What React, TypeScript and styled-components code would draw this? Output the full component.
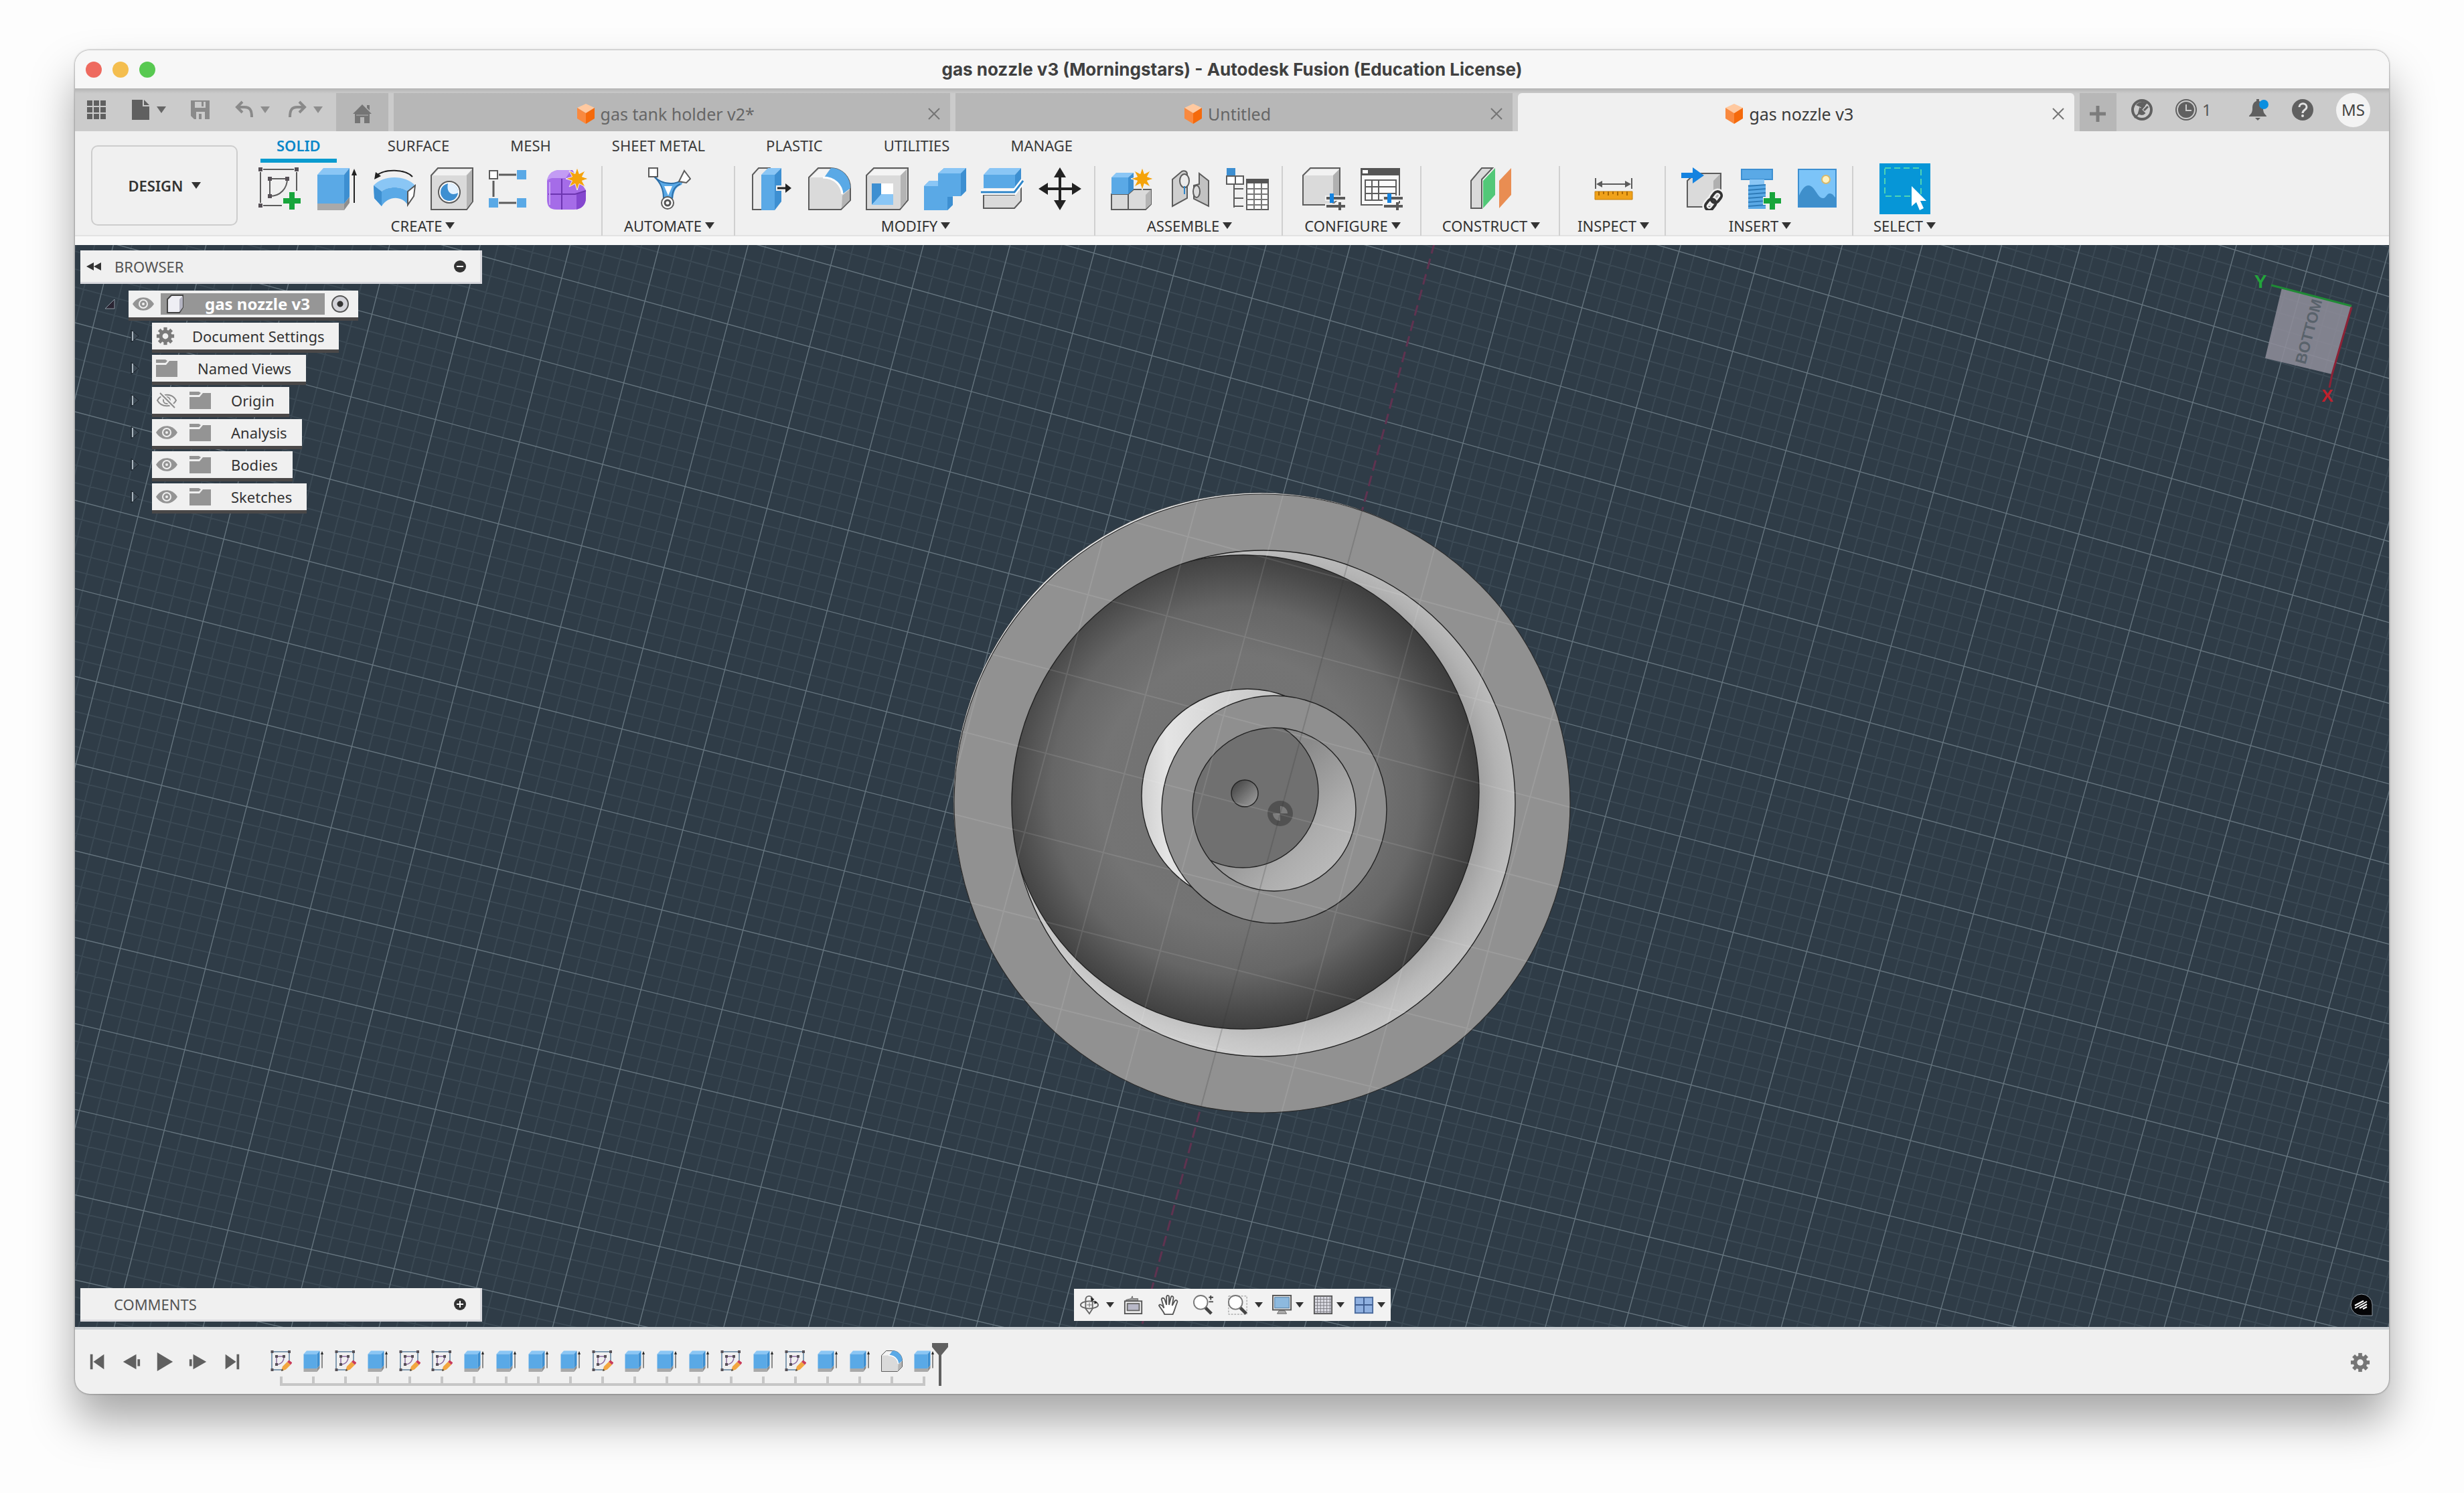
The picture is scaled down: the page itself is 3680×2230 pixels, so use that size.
import React from "react";
import styled, { createGlobalStyle, css } from "styled-components";

const GlobalStyle = createGlobalStyle`
  *, *::before, *::after { box-sizing: border-box; }
  html, body, #root { margin: 0; min-height: 100vh; }
  body { background: #fdfdfd; }
  button, input { font: inherit; color: inherit; margin: 0; padding: 0; border: 0; background: none; }
  ul, ol { list-style: none; margin: 0; padding: 0; }
`;

/* ---------- window ---------- */

const Desktop = styled.div`
  display: flex;
  min-height: 100vh;
  padding: 75px 112px 148px;
  font-family: "Noto Sans", "Open Sans", sans-serif;
  font-size: 22px;
  line-height: 30px;
  color: #3a3a3a;
`;

const Window = styled.div`
  flex: 1;
  min-width: 0;
  display: flex;
  flex-direction: column;
  overflow: hidden;
  border-radius: 22px;
  background: #f0f0f0;
  box-shadow: 0 0 3px rgba(0, 0, 0, 0.55), 0 40px 66px rgba(0, 0, 0, 0.34);
`;

const TitleBar = styled.header`
  display: grid;
  grid-template-columns: 1fr auto 1fr;
  align-items: center;
  height: 57px;
  padding: 0 16px;
  background: #f7f7f7;
`;

const Lights = styled.div`
  display: flex;
  gap: 16px;
`;

const Light = styled.button<{ $color: string }>`
  width: 24px;
  height: 24px;
  border-radius: 50%;
  background: ${(p) => p.$color};
`;

const WindowTitle = styled.h1`
  margin: 0;
  font: 700 26px/32px Inter, "Liberation Sans", sans-serif;
  color: #404040;
`;

/* ---------- document tabs ---------- */

const TabBar = styled.div`
  display: flex;
  align-items: center;
  height: 64px;
  background: linear-gradient(#b4b4b4, #c6c6c6 6px, #cbcbcb 8px);
`;

const QuickTools = styled.div`
  display: flex;
  align-items: center;
  gap: 36px;
  width: 390px;
  padding-left: 17px;
  color: #666;
`;

const QuickGroup = styled.div`
  display: flex;
  gap: 26px;
  color: #8d8d8d;
`;

const IconButton = styled.button`
  display: flex;
  align-items: center;
  gap: 9px;
`;

const Caret = styled.span`
  flex: none;
  width: 0;
  height: 0;
  border: 7px solid transparent;
  border-top: 10px solid currentColor;
  border-bottom: 0;
`;

const DocTabs = styled.div`
  flex: 1;
  min-width: 0;
  display: flex;
  align-self: flex-end;
  gap: 8px;
  height: 57px;
`;

const tabShape = css`
  display: flex;
  align-items: center;
  justify-content: center;
  padding-top: 5px;
  background: #b7b7b7;
  color: #666;
`;

const SmallTab = styled.button<{ $width: number }>`
  ${tabShape}
  width: ${(p) => p.$width}px;
`;

const DocTab = styled.div<{ $active?: boolean }>`
  ${tabShape}
  flex: 1;
  min-width: 0;
  padding-right: 14px;
  ${(p) => p.$active && "background: #f0f0f0; color: #3a3a3a; border-radius: 6px 6px 0 0;"}
`;

const DocTitle = styled.button`
  flex: 1;
  display: flex;
  align-items: center;
  justify-content: center;
  gap: 8px;
  padding-left: 14px;
  font-size: 25px;
  line-height: 32px;
`;

const Status = styled.div`
  display: flex;
  align-items: center;
  gap: 34px;
  padding: 0 28px 0 22px;
  color: #636363;
`;

const StatusButton = styled.button<{ $wide?: boolean }>`
  display: flex;
  align-items: center;
  gap: 8px;
  min-width: ${(p) => (p.$wide ? 74 : 32)}px;
  font-size: 24px;
  color: #555;
`;

const Avatar = styled.button`
  width: 51px;
  height: 51px;
  border-radius: 50%;
  background: #f3f3f3;
  font-size: 24px;
  color: #444;
`;

/* ---------- ribbon ---------- */

const Ribbon = styled.div`
  display: flex;
  height: 170px;
  border-bottom: 13px solid #f8f8f8;
  box-shadow: inset 0 -2px #e2e2e2;
`;

const Workspace = styled.button`
  display: flex;
  align-items: center;
  justify-content: center;
  gap: 12px;
  width: 219px;
  height: 120px;
  margin: 21px 7px 0 24px;
  border: 2px solid #cdcdcd;
  border-radius: 10px;
  font-weight: 600;
  color: #333;
`;

const RibbonTabs = styled.div`
  display: flex;
  gap: 43px;
  height: 52px;
  padding-left: 27px;
`;

const RibbonTab = styled.button<{ $active?: boolean }>`
  height: 47px;
  padding: 0 24px;
  border-bottom: 6px solid ${(p) => (p.$active ? "#0a9bcf" : "transparent")};
  color: ${(p) => (p.$active ? "#0a87c9" : "#3a3a3a")};
  font-weight: ${(p) => (p.$active ? 600 : 400)};
  &:first-child { margin-right: 9px; }
`;

const Groups = styled.div`
  display: flex;
`;

const Group = styled.section<{ $min: number }>`
  display: flex;
  flex-direction: column;
  align-items: center;
  gap: 8px;
  min-width: ${(p) => p.$min}px;
  height: 104px;
  padding: 2px 18px 0 21px;
  border-right: 2px solid #d0d0d0;
  &:last-child { border-right: 0; }
`;

const ToolRow = styled.div`
  display: flex;
  gap: 22px;
  height: 64px;
`;

const Tool = styled.button<{ $active?: boolean }>`
  display: flex;
  ${(p) => p.$active && "margin: -6px; padding: 6px; width: 76px; height: 76px; background: #0696d7;"}
`;

const GroupLabel = styled.button`
  display: flex;
  align-items: center;
  gap: 5px;
  height: 30px;
  white-space: nowrap;
  color: #333;
`;

/* ---------- canvas ---------- */

const Canvas = styled.main`
  position: relative;
  flex: 1;
  min-height: 0;
  overflow: hidden;
  background: #2f3c47;
`;

const SceneSvg = styled.svg`
  position: absolute;
  inset: 0;
  width: 100%;
  height: 100%;
`;

const Overlay = styled.div`
  position: relative;
  display: flex;
  flex-direction: column;
  justify-content: space-between;
  height: 100%;
  padding: 8px;
`;

const OverlayTop = styled.div`
  display: flex;
  justify-content: space-between;
`;

const OverlayBottom = styled.div`
  display: grid;
  grid-template-columns: 1fr auto 1fr;
  align-items: center;
`;

const Panel = styled.div`
  display: flex;
  align-items: center;
  gap: 20px;
  width: 600px;
  height: 50px;
  padding: 0 21px 0 9px;
  background: #f0f0f0;
  border-right: 3px solid #d9d9de;
  border-bottom: 3px solid #d9d9de;
  color: #555;
`;

const PanelTitle = styled.h2<{ $indent?: boolean }>`
  flex: 1;
  margin: 0;
  padding-left: ${(p) => (p.$indent ? 41 : 0)}px;
  font-size: 22px;
  font-weight: 400;
`;

const Tree = styled.ul<{ $root?: boolean }>`
  display: flex;
  flex-direction: column;
  gap: 8px;
  padding: ${(p) => (p.$root ? "10px 0 0 34px" : "8px 0 0 39px")};
`;

const TreeLine = styled.div`
  display: flex;
  align-items: center;
  gap: 18px;
`;

const TreeItem = styled.div<{ $root?: boolean }>`
  display: flex;
  align-items: center;
  gap: ${(p) => (p.$root ? 10 : 18)}px;
  height: 40px;
  padding: 0 ${(p) => (p.$root ? 14 : 22)}px 0 6px;
  background: #f0f0f0;
  box-shadow: 0 5px #4a4848;
`;

const TreeName = styled.button<{ $pad: number }>`
  padding-left: ${(p) => p.$pad}px;
  color: #333;
`;

const RootName = styled.button`
  display: flex;
  align-items: center;
  gap: 30px;
  height: 32px;
  padding: 0 22px 0 8px;
  background: #969696;
  color: #fff;
  font-size: 24px;
  font-weight: 700;
`;

const ActiveRadio = styled.input`
  appearance: none;
  width: 26px;
  height: 26px;
  border: 2px solid #555;
  border-radius: 50%;
  background: radial-gradient(circle, #333 4px, #d4d4da 5px);
`;

const NavBar = styled.nav`
  display: flex;
  align-items: center;
  gap: 14px;
  height: 48px;
  padding: 0 8px;
  background: #f2f2f2;
  color: #333;
`;

const NavButton = styled.button<{ $gap: number; $menu?: boolean }>`
  display: flex;
  align-items: center;
  gap: ${(p) => p.$gap}px;
  padding-right: ${(p) => (p.$menu ? 0 : 8)}px;
`;

const NavCaret = styled(Caret)`
  border-width: 8px 6px 0;
`;

const Assist = styled.button`
  display: flex;
  justify-self: end;
  margin-right: 16px;
`;

/* ---------- timeline ---------- */

const TimelineBar = styled.footer`
  display: flex;
  align-items: flex-start;
  height: 100px;
  padding: 0 28px 0 19px;
  border-top: 4px solid #cbd0d4;
`;

const Playback = styled.div`
  display: flex;
  align-items: center;
  gap: 20px;
  width: 265px;
  padding-top: 33px;
  color: #606060;
`;

const Track = styled.div`
  padding-top: 31px;
`;

const Features = styled.ol`
  display: flex;
`;

const Feature = styled.li`
  display: flex;
  flex-direction: column;
  align-items: center;
  gap: 7px;
  width: 48px;
  &::after { content: ""; width: 4px; height: 10px; background: #c6c6c6; }
`;

const Rail = styled.div`
  height: 4px;
  margin: 0 22px;
  background: #c6c6c6;
`;

const Marker = styled.button`
  display: flex;
  margin: 20px auto 0 -12px;
`;

const Settings = styled.button`
  display: flex;
  padding-top: 34px;
`;

/* ---------- icons ---------- */

const BLUE = "#5aa9e6";
const PALE = "#8ac6f5";
const DEEP = "#3d8fd1";
const GRAY = "#dadada";
const INK = "#5c5c5c";

type IconProps = { size?: number; box?: number; children?: React.ReactNode };
const Icon = ({ size = 64, box = 64, children }: IconProps) => (
  <svg width={size} height={size} viewBox={`0 0 ${box} ${box}`} fill="none" aria-hidden="true">
    {children}
  </svg>
);

const star = (cx: number, cy: number, R: number, r: number, n = 8) =>
  Array.from({ length: n * 2 }, (_, i) => {
    const a = (Math.PI * i) / n - Math.PI / 2;
    const d = i % 2 ? r : R;
    return `${(cx + d * Math.cos(a)).toFixed(1)},${(cy + d * Math.sin(a)).toFixed(1)}`;
  }).join(" ");

const Star = ({ x, y }: { x: number; y: number }) => (
  <polygon points={star(x, y, 17, 8)} fill="#f5a30a" stroke="#f0f0f0" />
);

const Plus = ({ x, y }: { x: number; y: number }) => (
  <path d={`M${x - 13} ${y}h26M${x} ${y - 13}v26`} stroke="#17a53b" strokeWidth="8" />
);

const Dots = ({ pts, s = 6 }: { pts: number[][]; s?: number }) => (
  <>
    {pts.map(([x, y]) => (
      <rect key={`${x}-${y}`} x={x - s / 2} y={y - s / 2} width={s} height={s} fill="#565056" />
    ))}
  </>
);

const Sliders = () => (
  <g>
    <path d="M34 46h30M34 58h30" stroke="#f0f0f0" strokeWidth="8" />
    <path d="M36 46h28M36 58h28M56 52v12" stroke="#5a5a5a" strokeWidth="4" />
    <path d="M44 39v14" stroke="#1583e0" strokeWidth="6" />
  </g>
);

const tools: Record<string, React.ReactNode> = {
  sketch: (
    <>
      <path d="M8 3h46M4 7v46M58 7v28M8 57h28" stroke={INK} strokeWidth="2" />
      <path d="M20 17h22M18 19v22M44 17c0 14-10 26-26 26" stroke={INK} strokeWidth="2" />
      <Dots pts={[[4, 3], [58, 3], [4, 57], [18, 17], [44, 17], [18, 43]]} />
      <Plus x={51} y={50} />
    </>
  ),
  extrude: (
    <>
      <path d="M3 54h40v10H3z" fill="#a9a9a9" />
      <path d="M43 54l8-10v9l-8 11z" fill="#8e8e8e" />
      <path d="M3 11L12 1h39l-8 10z" fill={PALE} />
      <path d="M3 11h40v43H3z" fill={BLUE} />
      <path d="M43 11l8-10v43l-8 10z" fill={DEEP} />
      <path d="M58 53V8" stroke="#222" strokeWidth="2" />
      <path d="M54 12l4-10 4 10z" fill="#222" />
    </>
  ),
  revolve: (
    <>
      <path d="M59 14C48 2 17 2 6 12" stroke="#222" strokeWidth="2" />
      <path d="M2 18l2-11 8 6z" fill="#222" />
      <path d="M1 27c14-16 48-16 62 0L52 36C42 28 22 28 13 36z" fill={PALE} />
      <path d="M1 27l12 9v22L2 46zM13 36c9-8 29-8 39 0l0 20c-9-14-29-14-39 2z" fill={BLUE} />
      <path d="M1 27l12 9v22L2 46z" fill={DEEP} />
      <path d="M52 36l11-9-2 16-9 13z" fill="#fff" stroke="#555" strokeWidth="2" />
    </>
  ),
  hole: (
    <>
      <path d="M1 12L11 1h52v50L54 63H1z" fill={GRAY} stroke={INK} strokeWidth="2" />
      <path d="M3 12L12 3h50l-9 9z" fill="#f2f2f2" />
      <path d="M54 12l8-9v48l-8 10z" fill="#b4b4b4" />
      <circle cx="28" cy="37" r="16" fill="#fff" stroke={INK} strokeWidth="2" />
      <circle cx="28" cy="37" r="13" fill={DEEP} />
      <path d="M26 24c-3 14 6 19 15 14a13 13 0 0 0-15-14z" fill="#e3f2ff" />
    </>
  ),
  pattern: (
    <>
      <path d="M16 11h26M8 20v24M16 53h26" stroke={INK} strokeWidth="3" />
      <rect x="2" y="5" width="12" height="12" fill="#fff" stroke={INK} strokeWidth="2" />
      <path d="M43 4h14v14H43zM1 46h14v14H1zM43 46h14v14H43z" fill={BLUE} />
    </>
  ),
  form: (
    <>
      <path d="M2 20C4 8 12 4 22 4h18l20 30v12c0 10-8 17-18 17H16C6 63 2 58 2 48z" fill="#a56ce8" />
      <path d="M2 20C4 8 12 4 22 4h16L30 16H12C6 16 4 18 2 20z" fill="#c39cf4" />
      <path d="M46 40l14-6v12c0 10-6 15-14 17z" fill="#8447cf" />
      <path d="M4 40h40l16-5M24 17v46" stroke="#6c35b0" strokeWidth="2" />
      <path d="M6 22v34" stroke="#c9a6f5" strokeWidth="2" />
      <Star x={47} y={17} />
    </>
  ),
  automate: (
    <>
      <path d="M8 12c8 10 18 12 26 12 8 0 14-3 20-8l-4 10c-8 3-12 8-13 24H23C23 34 20 22 8 12z" fill={BLUE} />
      <path d="M8 12c8 10 18 12 26 12 8 0 14-3 18-6M36 46c0-10 4-18 12-21M23 46c0-12-5-24-14-32" stroke="#2b6ea8" strokeWidth="2" />
      <path d="M24 28h12l-6 14z" fill="#fff" />
      <rect x="1" y="1" width="13" height="13" fill="#fff" stroke={INK} strokeWidth="2" />
      <path d="M54 5l9 12-6 6-11-2z" fill="#fff" stroke={INK} strokeWidth="2" />
      <circle cx="29" cy="53" r="9" fill="#fff" stroke={INK} strokeWidth="2" />
      <circle cx="29" cy="53" r="4" stroke="#555" strokeWidth="3" />
    </>
  ),
  pressPull: (
    <>
      <path d="M3 11L12 1h16L18 11v52H3z" fill="#ececec" stroke={INK} strokeWidth="2" />
      <path d="M16 11L26 1h20L36 11z" fill={PALE} />
      <path d="M16 11h20v53H16z" fill={BLUE} />
      <path d="M36 11L46 1v50L36 64z" fill={DEEP} />
      <path d="M38 31h18" stroke="#f0f0f0" strokeWidth="8" />
      <path d="M40 31h16" stroke="#222" strokeWidth="3" />
      <path d="M52 24l9 7-9 7z" fill="#222" />
    </>
  ),
  fillet: (
    <>
      <path d="M1 15L15 1h18c18 0 30 14 30 30v18L49 63H1z" fill={GRAY} stroke={INK} strokeWidth="2" />
      <path d="M3 15L16 3h16l-8 12z" fill="#f4f4f4" />
      <path d="M24 15L34 1c18 0 29 14 29 30L51 40C50 26 40 15 24 15z" fill={BLUE} />
      <path d="M22 15c18 0 28 12 29 25" stroke="#fff" strokeWidth="3" />
      <path d="M51 42l11-9v16L50 61z" fill="#b4b4b4" />
    </>
  ),
  shell: (
    <>
      <path d="M1 12L12 1h51v48L51 63H1z" fill={GRAY} stroke={INK} strokeWidth="2" />
      <path d="M3 12L13 3h48l-9 9z" fill="#f4f4f4" />
      <path d="M52 12l9-9v46l-9 12z" fill="#b4b4b4" />
      <path d="M9 24h32v32H9z" fill="#fff" />
      <path d="M9 24h14v18L9 56z" fill={DEEP} />
      <path d="M9 56l14-16h18v16z" fill={PALE} />
    </>
  ),
  combine: (
    <>
      <path d="M1 28l8-8h13V9l9-8h33v34l-8 8H44v13l-8 8H1z" fill={BLUE} />
      <path d="M1 28l8-8h13v8zM22 9l9-8h33l-8 8z" fill={PALE} />
      <path d="M56 9l8-8v34l-8 8zM36 44h8v12l-8 8z" fill={DEEP} />
    </>
  ),
  split: (
    <>
      <path d="M4 46l0-5h46L60 28v22L50 61H4z" fill={GRAY} stroke={INK} strokeWidth="2" />
      <path d="M4 11L13 1h47L51 11z" fill={PALE} />
      <path d="M4 11h47v20H4z" fill={BLUE} />
      <path d="M51 11l9-10v18L51 31z" fill={DEEP} />
      <path d="M0 37h50l13-17" stroke="#fff" strokeWidth="8" />
      <path d="M0 37h50l13-17" stroke="#2f86c9" strokeWidth="3" />
    </>
  ),
  move: (
    <>
      <path d="M32 10v44M10 32h44" stroke="#222" strokeWidth="4" />
      <path d="M32 0l9 15H23zM32 64l9-15H23zM0 32l14-9v18zM64 32l-14-9v18z" fill="#222" />
    </>
  ),
  component: (
    <>
      <path d="M26 40l8-7h26v22l-8 8H26z" fill={GRAY} stroke={INK} strokeWidth="2" />
      <path d="M1 40h25v23H1z" fill={GRAY} stroke={INK} strokeWidth="2" />
      <path d="M52 41l8-8v22l-8 7z" fill="#b4b4b4" />
      <path d="M1 15l7-7h26l-8 7z" fill={PALE} />
      <path d="M1 15h25v25H1z" fill={BLUE} />
      <path d="M26 15l8-7v25l-8 7z" fill={DEEP} />
      <Star x={47} y={17} />
    </>
  ),
  joint: (
    <>
      <path d="M6 58V18L20 6c4-2 8 0 8 4v36z" fill="#cfcfcf" stroke={INK} strokeWidth="2" />
      <path d="M60 58V20L46 9v16l-8 2v20z" fill="#c2c2c2" stroke={INK} strokeWidth="2" />
      <ellipse cx="24" cy="20" rx="7" ry="10" fill="#ececec" stroke={INK} strokeWidth="2" />
      <path d="M24 28v12" stroke="#2f86c9" strokeWidth="2" />
      <ellipse cx="42" cy="36" rx="5" ry="9" fill="#dcdcdc" stroke={INK} strokeWidth="2" />
    </>
  ),
  table: (
    <>
      <path d="M12 26v34M12 32h14M12 46h14M12 58h14" stroke={INK} strokeWidth="2" />
      <path d="M1 1h13v12H1z" fill={DEEP} />
      <path d="M1 13h13v12H1zM14 13h12v12H14z" fill="#fff" stroke={INK} strokeWidth="2" />
      <path d="M31 18h32v45H31z" fill="#fff" stroke={INK} strokeWidth="2" />
      <path d="M30 17h34v7H30z" fill="#555" />
      <path d="M31 32h32M31 40h32M31 48h32M31 56h32M42 24v39M53 24v39" stroke="#777" strokeWidth="2" />
    </>
  ),
  configure: (
    <>
      <path d="M1 12L12 1h44v44L44 56H1z" fill={GRAY} stroke={INK} strokeWidth="2" />
      <path d="M3 12L13 3h42l-9 9z" fill="#f2f2f2" />
      <path d="M46 12l9-9v42l-9 9z" fill="#b0b0b0" />
      <Sliders />
    </>
  ),
  configTable: (
    <>
      <path d="M2 2h57v54H2z" fill="#fafafa" stroke={INK} strokeWidth="2" />
      <path d="M1 1h59v11H1z" fill="#555" />
      <path d="M4 4h8v5H4z" fill="#fff" />
      <path d="M8 19h46v30H8zM8 29h46M8 39h46M18 19v30M28 19v30" stroke={INK} strokeWidth="2" />
      <Sliders />
    </>
  ),
  construct: (
    <>
      <path d="M2 20L18 1h16L18 18v43H2z" fill={GRAY} stroke={INK} strokeWidth="2" />
      <path d="M20 20L38 1v40L20 61z" fill="#52c878" />
      <path d="M44 20L62 1v40L44 61z" fill="#e98d52" />
    </>
  ),
  inspect: (
    <>
      <path d="M5 16v16M59 16v16M8 25h48" stroke={INK} strokeWidth="2" />
      <path d="M6 25l9-5v10zM58 25l-9-5v10z" fill={INK} />
      <path d="M4 36h56v12H4z" fill="#f0a21a" stroke="#c47d08" strokeWidth="1" />
      <path d="M10 36v6M17 36v4M24 36v6M31 36v4M38 36v6M45 36v4M52 36v6" stroke="#a86600" strokeWidth="2" />
    </>
  ),
  derive: (
    <>
      <path d="M9 20l12-11h38v34L47 59H9z" fill={GRAY} stroke={INK} strokeWidth="2" />
      <path d="M48 20l10-10v32L48 56z" fill="#b0b0b0" />
      <path d="M0 8h17V0l17 12-17 12v-8H0z" fill="#1583e0" />
      <g transform="rotate(-52 48 50)" stroke="#f0f0f0" strokeWidth="9">
        <rect x="32" y="44" width="18" height="12" rx="6" />
        <rect x="46" y="44" width="18" height="12" rx="6" />
      </g>
      <g transform="rotate(-52 48 50)" stroke="#333" strokeWidth="4">
        <rect x="32" y="44" width="18" height="12" rx="6" />
        <rect x="46" y="44" width="18" height="12" rx="6" />
      </g>
    </>
  ),
  fastener: (
    <>
      <path d="M4 3h46v15H4z" fill={BLUE} stroke={DEEP} strokeWidth="2" />
      <path d="M16 18h22v8H16z" fill={PALE} />
      <path d="M14 26h26v36H14z" fill={BLUE} />
      <path d="M14 28l26-2M14 34l26-2M14 40l26-2M14 46l26-2M14 52l26-2M14 58l26-2" stroke="#2e7bb8" strokeWidth="2" />
      <path d="M36 50h28M50 36v28" stroke="#f0f0f0" strokeWidth="12" />
      <Plus x={50} y={50} />
    </>
  ),
  image: (
    <>
      <rect x="3" y="3" width="56" height="56" fill="#7cc4f8" stroke={DEEP} strokeWidth="2" />
      <path d="M4 42c6-14 14-20 22-10 6 8 8 14 14 14 4 0 6-8 10-7 4 0 6 4 8 6v13H4z" fill="#3f8fcb" />
      <circle cx="44" cy="18" r="6" fill="#fff2c0" stroke="#d8b96a" strokeWidth="2" />
    </>
  ),
  select: (
    <>
      <rect x="2" y="1" width="54" height="42" stroke="#4fd3b4" strokeWidth="2" strokeDasharray="9 5" />
      <path d="M42 28v30l7-6 5 12 6-3-5-11h9z" fill="#fff" />
    </>
  ),
  sketchEdit: (
    <>
      <path d="M6 4h46M4 6v50M56 6v26M6 58h30" stroke="#5c7f9c" strokeWidth="3" />
      <path d="M18 18h22M18 18v24M40 20c0 12-8 22-22 22" stroke="#8d6ba0" strokeWidth="3" />
      <Dots pts={[[5, 4], [56, 4], [5, 58], [18, 18], [40, 18], [18, 42]]} s={8} />
      <path d="M32 62l4-14 14-14 10 9-14 14z" fill="#f2a640" />
      <path d="M50 34l5-5 10 8-5 6z" fill="#c93b5b" />
      <path d="M32 62l2-7 5 5z" fill="#444" />
    </>
  ),
};

const Cube = () => (
  <svg width="28" height="30" viewBox="0 0 28 30" aria-hidden="true">
    <path d="M14 0l13 6-13 8L1 6z" fill="#ffc9a0" />
    <path d="M1 6l13 8v16L1 22z" fill="#f9893f" />
    <path d="M27 6l-13 8v16l13-8z" fill="#f56a0c" />
  </svg>
);

const Close = () => (
  <svg width="20" height="20" viewBox="0 0 20 20" aria-hidden="true">
    <path d="M2 2l16 16M18 2L2 18" stroke="#757575" strokeWidth="2" />
  </svg>
);

const Eye = ({ off }: { off?: boolean }) => (
  <svg width="32" height="24" viewBox="0 0 32 24" fill="none" aria-hidden="true">
    {off ? (
      <>
        <path d="M2 12C8 1 24 1 30 12 24 23 8 23 2 12z" stroke="#8c8c8c" strokeWidth="2" />
        <circle cx="16" cy="12" r="5" stroke="#8c8c8c" strokeWidth="2" />
        <path d="M6 1l22 22" stroke="#f0f0f0" strokeWidth="6" />
        <path d="M6 1l22 22" stroke="#8c8c8c" strokeWidth="2" />
      </>
    ) : (
      <>
        <path d="M0 12C8-1 24-1 32 12 24 25 8 25 0 12z" fill="#949494" />
        <circle cx="16" cy="12" r="6" stroke="#f0f0f0" strokeWidth="2" />
        <circle cx="16" cy="12" r="2" fill="#f0f0f0" />
      </>
    )}
  </svg>
);

const Folder = () => (
  <svg width="32" height="26" viewBox="0 0 32 26" aria-hidden="true">
    <path d="M0 0h14l3 2-3 3H0zM0 8h15l5-6h12v24H0z" fill="#949494" />
  </svg>
);

const Gear = ({ size, color }: { size: number; color: string }) => (
  <Icon size={size} box={32}>
    {[0, 45, 90, 135].map((a) => (
      <rect key={a} x="13" y="1" width="6" height="30" fill={color} transform={`rotate(${a} 16 16)`} />
    ))}
    <circle cx="16" cy="16" r="11" fill={color} />
    <circle cx="16" cy="16" r="5" fill="#f0f0f0" />
  </Icon>
);

const Twisty = ({ open }: { open?: boolean }) => (
  <svg width={open ? 20 : 16} height="20" viewBox={open ? "0 0 20 20" : "0 0 16 20"} aria-hidden="true">
    {open ? (
      <path d="M17 3v14H3z" fill="#2a2533" stroke="#8b96a0" />
    ) : (
      <>
        <path d="M3 1l11 9-11 9z" fill="#3d4a55" stroke="#1b222a" />
        <path d="M5 3v14" stroke="#a9b4bd" strokeWidth="2" />
      </>
    )}
  </svg>
);

const RoundSign = ({ plus }: { plus?: boolean }) => (
  <Icon size={18} box={18}>
    <circle cx="9" cy="9" r="9" fill="#333" />
    <path d={plus ? "M4 9h10M9 4v10" : "M4 9h10"} stroke="#fff" strokeWidth="2" />
  </Icon>
);

/* ---------- 3D scene ---------- */

const TOP = 375;
const BOTTOM = 1900;
const LEFT = 112;
const RIGHT = 3568;

const steep = (k: number) => {
  const a = (2139 + 132.08 * k) / (1 + 0.003658 * k);
  const b = (1727 + 128.61 * k) / (1 + 0.003395 * k);
  const s = (b - a) / (BOTTOM - TOP);
  return `M${(a + s * (340 - TOP)).toFixed(1)} 340L${(a + s * (2000 - TOP)).toFixed(1)} 2000`;
};

const shallow = (j: number) => {
  const l = (482 + 134.4 * j) / (1 + 0.00231 * j);
  const r = (443 + 123.3 * (j + 8)) / (1 + 0.0017 * (j + 8));
  return `M${LEFT} ${l.toFixed(1)}L${RIGHT} ${r.toFixed(1)}`;
};

const span = (from: number, to: number) => Array.from({ length: to - from + 1 }, (_, i) => from + i);
const majorPath =
  span(-16, 17).filter((k) => k !== 0).map(steep).join("") + span(-9, 12).map(shallow).join("");
const minorPath =
  span(-80, 85).filter((k) => k % 5).map((k) => steep(k / 5)).join("") +
  span(-45, 60).filter((j) => j % 5).map((j) => shallow(j / 5)).join("");

const Scene = () => (
  <SceneSvg viewBox="112 366 3456 1616" preserveAspectRatio="xMidYMid slice" fill="none" role="img" aria-label="gas nozzle model, bottom view">
    <defs>
      <radialGradient id="dome" gradientUnits="userSpaceOnUse" cx="1845" cy="1180" r="366">
        <stop offset="0" stopColor="#707070" />
        <stop offset="0.55" stopColor="#747474" />
        <stop offset="0.75" stopColor="#666" />
        <stop offset="0.9" stopColor="#4b4b4b" />
        <stop offset="1" stopColor="#3b3b3b" />
      </radialGradient>
      <radialGradient id="wall" gradientUnits="userSpaceOnUse" cx="1872" cy="1192" r="392">
        <stop offset="0.86" stopColor="#a0a0a0" />
        <stop offset="0.93" stopColor="#b2b2b2" />
        <stop offset="1" stopColor="#bebebe" />
      </radialGradient>
      <linearGradient id="wallGlow" x1="1" y1="0.8" x2="0.4" y2="1">
        <stop offset="0" stopColor="#fff" stopOpacity="0" />
        <stop offset="1" stopColor="#fff" stopOpacity="0.3" />
      </linearGradient>
      <linearGradient id="bore" x1="0" y1="0" x2="1" y2="1">
        <stop offset="0.4" stopColor="#8a8a8a" />
        <stop offset="0.7" stopColor="#adadad" />
        <stop offset="1" stopColor="#c4c4c4" />
      </linearGradient>
      <linearGradient id="side" x1="0" y1="0" x2="1" y2="0">
        <stop offset="0" stopColor="#cfcfcf" />
        <stop offset="0.12" stopColor="#e4e4e4" />
        <stop offset="0.6" stopColor="#c8c8c8" />
      </linearGradient>
      <linearGradient id="pin" x1="0" y1="0" x2="1" y2="1">
        <stop offset="0" stopColor="#3a3a3a" />
        <stop offset="1" stopColor="#a5a5a5" />
      </linearGradient>
      <clipPath id="opening"><ellipse cx="1887" cy="1200" rx="376" ry="378" /></clipPath>
      <clipPath id="boreClip"><ellipse cx="1903" cy="1209" rx="122" ry="122" /></clipPath>
      <clipPath id="body"><ellipse cx="1885" cy="1200" rx="460" ry="462" /></clipPath>
    </defs>
    <path d={minorPath} stroke="#3b4954" strokeWidth="2" />
    <path d={majorPath} stroke="#65747e" strokeWidth="1.4" />
    <path d={steep(0)} stroke="#5f3350" strokeWidth="3" strokeDasharray="16 8" />

    <ellipse cx="1882" cy="1197" rx="458" ry="461" fill="#e8e8e8" stroke="#222" strokeWidth="0.5" />
    <ellipse cx="1885" cy="1200" rx="460" ry="462" fill="#919191" stroke="#2a2a2a" strokeWidth="1.2" />
    <ellipse cx="1887" cy="1200" rx="376" ry="378" fill="url(#wall)" />
    <ellipse cx="1887" cy="1200" rx="376" ry="378" fill="url(#wallGlow)" />
    <g clipPath="url(#opening)">
      <ellipse cx="1857" cy="1183" rx="352" ry="354" fill="url(#dome)" stroke="#222" strokeWidth="1.4" />
    </g>
    <ellipse cx="1887" cy="1200" rx="376" ry="378" stroke="#222" strokeWidth="1.4" />
    <ellipse cx="1863" cy="1189" rx="158" ry="160" fill="url(#side)" stroke="#222" strokeWidth="1.4" />
    <ellipse cx="1903" cy="1209" rx="168" ry="170" fill="#8f8f8f" stroke="#222" strokeWidth="1.4" />
    <ellipse cx="1903" cy="1209" rx="122" ry="122" fill="url(#bore)" />
    <g clipPath="url(#boreClip)">
      <circle cx="1856" cy="1183" r="113" fill="#707070" stroke="#222" strokeWidth="1.4" />
    </g>
    <ellipse cx="1903" cy="1209" rx="122" ry="122" stroke="#222" strokeWidth="1.4" />
    <circle cx="1859" cy="1185" r="20" fill="url(#pin)" stroke="#222" strokeWidth="1.4" />
    <circle cx="1912" cy="1215" r="19" fill="#4a4a4a" opacity="0.8" />
    <path d="M1912 1215v-11a11 11 0 0 1 11 11zM1912 1215v11a11 11 0 0 1-11-11z" fill="#7c7c7c" />
    <g clipPath="url(#body)">
      <path d={majorPath} stroke="#fff" strokeWidth="2" opacity="0.1" />
      <path d={steep(0)} stroke="#333" strokeWidth="2" opacity="0.2" />
    </g>
  </SceneSvg>
);

const CubeButton = styled.button`
  display: block;
  margin: 26px 32px 0 0;
  height: 210px;
`;

const ViewCube = () => (
  <CubeButton aria-label="View cube">
    <svg width="168" height="210" viewBox="3360 400 168 210" aria-hidden="true">
      <path d="M3408 430l104 27-29 102-100-24z" fill="#8d8c98" opacity="0.88" />
      <path d="M3392 426l16 4 104 27" stroke="#1f8a35" strokeWidth="3" fill="none" />
      <path d="M3512 459l-29 100-4 20" stroke="#8c2236" strokeWidth="3" fill="none" />
      <g fontFamily="Liberation Sans, Arial, sans-serif" textAnchor="middle">
        <text x="3448" y="495" dy="8" fontSize="23" fontWeight="700" fill="#59626b" transform="rotate(-75 3448 495)">BOTTOM</text>
        <text x="3376" y="430" fontSize="28" fontWeight="700" fill="#22a43a">Y</text>
        <text x="3476" y="600" fontSize="26" fontWeight="700" fill="#c0202c">X</text>
      </g>
    </svg>
  </CubeButton>
);

/* ---------- data ---------- */

const ribbonTabs = ["SOLID", "SURFACE", "MESH", "SHEET METAL", "PLASTIC", "UTILITIES", "MANAGE"];

const groups: { label: string; min: number; items: string[] }[] = [
  { label: "CREATE", min: 538, items: ["sketch", "extrude", "revolve", "hole", "pattern", "form"] },
  { label: "AUTOMATE", min: 198, items: ["automate"] },
  { label: "MODIFY", min: 538, items: ["pressPull", "fillet", "shell", "combine", "split", "move"] },
  { label: "ASSEMBLE", min: 280, items: ["component", "joint", "table"] },
  { label: "CONFIGURE", min: 207, items: ["configure", "configTable"] },
  { label: "CONSTRUCT", min: 207, items: ["construct"] },
  { label: "INSPECT", min: 158, items: ["inspect"] },
  { label: "INSERT", min: 280, items: ["derive", "fastener", "image"] },
  { label: "SELECT", min: 150, items: ["select"] },
];

const docs = ["gas tank holder v2*", "Untitled", "gas nozzle v3"];

const nodes: { name: string; icon: "gear" | "folder"; eye?: "on" | "off" }[] = [
  { name: "Document Settings", icon: "gear" },
  { name: "Named Views", icon: "folder" },
  { name: "Origin", icon: "folder", eye: "off" },
  { name: "Analysis", icon: "folder", eye: "on" },
  { name: "Bodies", icon: "folder", eye: "on" },
  { name: "Sketches", icon: "folder", eye: "on" },
];

const history = "SESESSEEEESEEESESEEFE".split("");
const featureIcon: Record<string, string> = { S: "sketchEdit", E: "extrude", F: "fillet" };

const navItems: { name: string; menu?: boolean; gap?: number; art: React.ReactNode }[] = [
  {
    name: "Orbit",
    menu: true,
    gap: 10,
    art: (
      <>
        <ellipse cx="16" cy="16" rx="14" ry="6" stroke="#666" strokeWidth="2" />
        <path d="M10 22V8c0-8 11-8 11 0v14l-5 8z" stroke="#666" strokeWidth="2" />
        <path d="M16 12v8M12 16h8" stroke="#666" />
        <path d="M18 4l6 3-5 4zM24 9l5 3-5 3z" fill="#222" />
      </>
    ),
  },
  {
    name: "Look at",
    art: (
      <>
        <path d="M4 8l8-2 2-4 1 4h8v4H4z" fill="#999" stroke="#666" />
        <rect x="2" y="10" width="27" height="20" fill="#f4f4f4" stroke="#555" strokeWidth="2" />
        <rect x="6" y="14" width="19" height="11" fill="#b9b9c8" stroke="#666" strokeWidth="2" />
      </>
    ),
  },
  {
    name: "Pan",
    art: (
      <path
        d="M10 31c-2-5-6-9-9-14 1-3 5-1 8 4L5 7c1-3 4-2 5 0l3 9V3c1-3 4-2 4 0v13l3-12c1-3 4-2 4 1l-2 12 4-7c2-3 5-1 4 2-3 7-4 13-7 19z"
        fill="#fff" stroke="#555" strokeWidth="2"
      />
    ),
  },
  {
    name: "Zoom",
    art: (
      <>
        <path d="M19 20l10 10" stroke="#444" strokeWidth="5" />
        <circle cx="12" cy="12" r="11" fill="#fff" stroke="#777" strokeWidth="2" />
        <path d="M25 4h7M28 1v7M25 11h7" stroke="#444" strokeWidth="2" />
      </>
    ),
  },
  {
    name: "Fit",
    menu: true,
    gap: 10,
    art: (
      <>
        <rect x="1" y="2" width="29" height="29" stroke="#888" strokeDasharray="3 2" />
        <path d="M19 20l10 10" stroke="#444" strokeWidth="5" />
        <circle cx="12" cy="12" r="11" fill="#fff" stroke="#777" strokeWidth="2" />
      </>
    ),
  },
  {
    name: "Display settings",
    menu: true,
    art: (
      <>
        <rect x="1" y="1" width="29" height="23" fill="#e4e4e4" stroke="#555" strokeWidth="2" />
        <rect x="4" y="4" width="23" height="17" fill="#8db9de" stroke="#4c7ba5" strokeWidth="1" />
        <path d="M11 25h9l3 5H8z" fill="#aaa" stroke="#666" />
      </>
    ),
  },
  {
    name: "Grid and snaps",
    menu: true,
    art: (
      <>
        <rect x="2" y="2" width="28" height="28" fill="#dcdce4" stroke="#555" strokeWidth="2" />
        <path d="M7 2v28M12 2v28M17 2v28M22 2v28M27 2v28M2 7h28M2 12h28M2 17h28M2 22h28M2 27h28" stroke="#77777f" />
      </>
    ),
  },
  {
    name: "Viewports",
    menu: true,
    art: (
      <>
        <rect x="2" y="4" width="28" height="25" fill="#8fb0e0" stroke="#4a6a9c" strokeWidth="2" />
        <path d="M16 4v25M2 16h28" stroke="#3f5d90" strokeWidth="2" />
      </>
    ),
  },
];

const playback = [
  { name: "Go to start", d: "M4 4h4v24H4zM26 4v24L9 16z" },
  { name: "Step back", d: "M24 4v24L3 16zM26 12h4v11h-4z" },
  { name: "Play", d: "M4 1l25 15L4 31z" },
  { name: "Step forward", d: "M8 4v24l21-12zM2 12h4v11H2z" },
  { name: "Go to end", d: "M24 4h4v24h-4zM6 4v24l17-12z" },
];

/* ---------- app ---------- */

export default function App() {
  return (
    <Desktop>
      <GlobalStyle />
      <Window>
        <TitleBar>
          <Lights>
            <Light $color="#ee6a5f" aria-label="Close window" />
            <Light $color="#f4be4f" aria-label="Minimise window" />
            <Light $color="#58c951" aria-label="Zoom window" />
          </Lights>
          <WindowTitle>gas nozzle v3 (Morningstars) - Autodesk Fusion (Education License)</WindowTitle>
        </TitleBar>

        <TabBar>
          <QuickTools>
            <IconButton aria-label="Data panel">
              <Icon size={30} box={30}>
                <path d="M1 1h8v8H1zM11 1h8v8h-8zM21 1h8v8h-8zM1 11h8v8H1zM11 11h8v8h-8zM21 11h8v8h-8zM1 21h8v8H1zM11 21h8v8h-8zM21 21h8v8h-8z" fill="#606060" />
              </Icon>
            </IconButton>
            <IconButton aria-label="File">
              <Icon size={30} box={30}>
                <path d="M2 0h16v10h10v20H2zM20 0l8 8h-8z" fill="#606060" />
              </Icon>
              <Caret />
            </IconButton>
            <IconButton aria-label="Save">
              <Icon size={30} box={30}>
                <path d="M1 1h28v28H6l-5-5z" fill="#8a8a8a" />
                <path d="M7 3h16v9H7zM9 18h13v11H9z" fill="#cbcbcb" />
                <path d="M13 21h4v8h-4zM17 3h3v7h-3z" fill="#8a8a8a" />
              </Icon>
            </IconButton>
            <QuickGroup>
              <IconButton aria-label="Undo">
                <Icon size={30} box={30}>
                  <path d="M12 3L4 11l8 8M5 11h10c8 0 11 4 11 15" stroke="#8a8a8a" strokeWidth="4" />
                </Icon>
                <Caret />
              </IconButton>
              <IconButton aria-label="Redo">
                <Icon size={30} box={30}>
                  <path d="M18 3l8 8-8 8M25 11H15C7 11 4 15 4 26" stroke="#8a8a8a" strokeWidth="4" />
                </Icon>
                <Caret />
              </IconButton>
            </QuickGroup>
          </QuickTools>

          <DocTabs>
            <SmallTab $width={78} aria-label="Home">
              <Icon size={30} box={30}>
                <path d="M15 1l14 14h-3v14h-8v-9h-6v9H4V15H1zM22 2h4v8l-4-4z" fill="#757575" />
                <path d="M6 17h18" stroke="#b7b7b7" strokeWidth="1" />
              </Icon>
            </SmallTab>
            {docs.map((name, i) => (
              <DocTab key={name} $active={i === 2}>
                <DocTitle>
                  <Cube />
                  {name}
                </DocTitle>
                <IconButton aria-label={`Close ${name}`}>
                  <Close />
                </IconButton>
              </DocTab>
            ))}
            <SmallTab $width={55} aria-label="New design">
              <Icon size={26} box={26}>
                <path d="M13 1v24M1 13h24" stroke="#7c7c7c" strokeWidth="5" />
              </Icon>
            </SmallTab>
          </DocTabs>

          <Status>
            <StatusButton aria-label="Extensions">
              <Icon size={32} box={32}>
                <circle cx="16" cy="16" r="14" stroke="#606060" strokeWidth="4" />
                <path d="M7 9C12 3 19 3 24 6l-7 8-3-2z" fill="#606060" />
                <path d="M20 9l-5 6M25 11l-6 6" stroke="#606060" strokeWidth="3" />
                <path d="M13 14l7 7c-3 3-7 2-9 0zM12 21l-7 7" fill="#606060" stroke="#606060" strokeWidth="2" />
              </Icon>
            </StatusButton>
            <StatusButton $wide>
              <Icon size={32} box={32}>
                <circle cx="16" cy="16" r="15" stroke="#606060" strokeWidth="2" />
                <circle cx="16" cy="16" r="12" fill="#606060" />
                <path d="M16 8v9h8" stroke="#cbcbcb" strokeWidth="2" />
              </Icon>
              1
            </StatusButton>
            <StatusButton aria-label="Notifications">
              <Icon size={32} box={32}>
                <path d="M13 0h4v3c5 2 6 6 6 11 0 6 2 8 5 11v1H2v-1c3-3 5-5 5-11 0-5 1-9 6-11zM11 28h8l-4 4z" fill="#606060" />
                <circle cx="24" cy="8" r="7" fill="#0a8fe0" />
              </Icon>
            </StatusButton>
            <StatusButton aria-label="Help">
              <Icon size={32} box={32}>
                <circle cx="16" cy="16" r="16" fill="#606060" />
                <path d="M11 12c0-7 11-7 11 0 0 4-6 4-6 9" stroke="#e2e2e2" strokeWidth="3" />
                <circle cx="16" cy="25" r="2" fill="#e2e2e2" />
              </Icon>
            </StatusButton>
            <Avatar>MS</Avatar>
          </Status>
        </TabBar>

        <Ribbon>
          <Workspace>
            DESIGN <Caret />
          </Workspace>
          <div>
            <RibbonTabs>
              {ribbonTabs.map((t, i) => (
                <RibbonTab key={t} $active={i === 0}>{t}</RibbonTab>
              ))}
            </RibbonTabs>
            <Groups>
              {groups.map((g) => (
                <Group key={g.label} $min={g.min}>
                  <ToolRow>
                    {g.items.map((id) => (
                      <Tool key={id} $active={id === "select"} aria-label={id}>
                        <Icon>{tools[id]}</Icon>
                      </Tool>
                    ))}
                  </ToolRow>
                  <GroupLabel>
                    {g.label} <Caret />
                  </GroupLabel>
                </Group>
              ))}
            </Groups>
          </div>
        </Ribbon>

        <Canvas>
          <Scene />
          <Overlay>
            <OverlayTop>
              <div>
                <Panel>
                  <IconButton aria-label="Collapse browser">
                    <svg width="22" height="12" viewBox="0 0 22 12" aria-hidden="true">
                      <path d="M11 0v12L0 6zM22 0v12L11 6z" fill="#333" />
                    </svg>
                  </IconButton>
                  <PanelTitle>BROWSER</PanelTitle>
                  <IconButton aria-label="Minimise browser">
                    <RoundSign />
                  </IconButton>
                </Panel>
                <Tree $root>
                  <li>
                    <TreeLine>
                      <Twisty open />
                      <TreeItem $root>
                        <IconButton aria-label="Hide gas nozzle v3">
                          <Eye />
                        </IconButton>
                        <RootName>
                          <Icon size={28} box={28}>
                            <path d="M2 7l6-6h17v18l-5 8H2z" fill="#eeeef4" stroke="#444" strokeWidth="2" />
                            <path d="M20 7l5-5v17l-5 7z" fill="#b5b5c2" />
                          </Icon>
                          gas nozzle v3
                        </RootName>
                        <ActiveRadio type="radio" name="component" defaultChecked aria-label="Activate gas nozzle v3" />
                      </TreeItem>
                    </TreeLine>
                    <Tree>
                      {nodes.map((n) => (
                        <TreeLine as="li" key={n.name}>
                          <Twisty />
                          <TreeItem>
                            {n.eye && (
                              <IconButton aria-label={`Toggle ${n.name}`}>
                                <Eye off={n.eye === "off"} />
                              </IconButton>
                            )}
                            {n.icon === "gear" ? <Gear size={28} color="#7a7a7a" /> : <Folder />}
                            <TreeName $pad={n.icon === "gear" ? 8 : 12}>{n.name}</TreeName>
                          </TreeItem>
                        </TreeLine>
                      ))}
                    </Tree>
                  </li>
                </Tree>
              </div>
              <ViewCube />
            </OverlayTop>

            <OverlayBottom>
              <Panel>
                <PanelTitle $indent>COMMENTS</PanelTitle>
                <IconButton aria-label="Expand comments">
                  <RoundSign plus />
                </IconButton>
              </Panel>
              <NavBar aria-label="Navigation">
                {navItems.map((n) => (
                  <NavButton key={n.name} aria-label={n.name} $gap={n.gap ?? 5} $menu={n.menu}>
                    <Icon size={30} box={32}>{n.art}</Icon>
                    {n.menu && <NavCaret />}
                  </NavButton>
                ))}
              </NavBar>
              <Assist aria-label="Assistant">
                <Icon size={34} box={34}>
                  <path d="M17 1h0a16 16 0 0 1 16 16v16H17A16 16 0 0 1 17 1z" fill="#050507" stroke="#8b96a0" />
                  <path d="M7 18l13-7M7 22l18-10M14 22l11-6M19 23l6-3" stroke="#fff" strokeWidth="2" />
                </Icon>
              </Assist>
            </OverlayBottom>
          </Overlay>
        </Canvas>

        <TimelineBar>
          <Playback>
            {playback.map((p) => (
              <IconButton key={p.name} aria-label={p.name}>
                <Icon size={30} box={32}>
                  <path d={p.d} fill="#606060" />
                </Icon>
              </IconButton>
            ))}
          </Playback>
          <Track>
            <Features>
              {history.map((f, i) => (
                <Feature key={i}>
                  <IconButton aria-label={`Feature ${i + 1}`}>
                    <Icon size={32}>{tools[featureIcon[f]]}</Icon>
                  </IconButton>
                </Feature>
              ))}
            </Features>
            <Rail />
          </Track>
          <Marker aria-label="Timeline marker">
            <svg width="24" height="64" viewBox="0 0 24 64" aria-hidden="true">
              <path d="M0 0h24v6L14 18v46h-4V18L0 6z" fill="#606060" />
            </svg>
          </Marker>
          <Settings aria-label="Settings">
            <Gear size={30} color="#757575" />
          </Settings>
        </TimelineBar>
      </Window>
    </Desktop>
  );
}
